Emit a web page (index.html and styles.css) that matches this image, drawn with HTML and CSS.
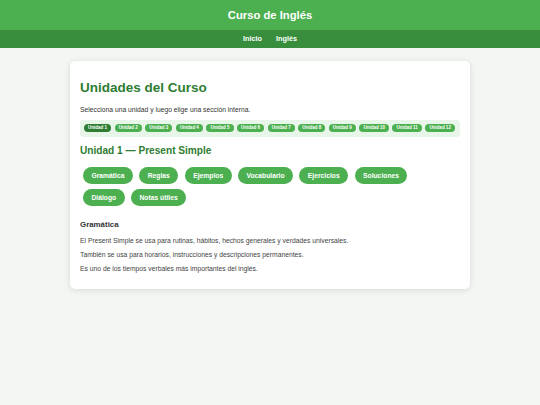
FILE: index.html
```html
<!DOCTYPE html>
<html lang="es">
<head>
<meta charset="utf-8">
<title>Curso de Inglés</title>
<link rel="stylesheet" href="styles.css">
</head>
<body>
<header class="site-header">
  <div class="site-title">Curso de Inglés</div>
</header>
<nav class="site-nav">
  <a href="#" class="nav-link">Inicio</a>
  <a href="#" class="nav-link">Inglés</a>
</nav>
<main class="page">
  <section class="card">
    <h1 class="card-title">Unidades del Curso</h1>
    <p class="intro">Selecciona una unidad y luego elige una sección interna.</p>
    <div class="units">
      <span class="unit active">Unidad 1</span>
      <span class="unit">Unidad 2</span>
      <span class="unit">Unidad 3</span>
      <span class="unit">Unidad 4</span>
      <span class="unit">Unidad 5</span>
      <span class="unit">Unidad 6</span>
      <span class="unit">Unidad 7</span>
      <span class="unit">Unidad 8</span>
      <span class="unit">Unidad 9</span>
      <span class="unit">Unidad 10</span>
      <span class="unit">Unidad 11</span>
      <span class="unit">Unidad 12</span>
    </div>
    <h2 class="unit-title">Unidad 1 — Present Simple</h2>
    <div class="sections">
      <span class="section-btn">Gramática</span>
      <span class="section-btn">Reglas</span>
      <span class="section-btn">Ejemplos</span>
      <span class="section-btn">Vocabulario</span>
      <span class="section-btn">Ejercicios</span>
      <span class="section-btn">Soluciones</span>
      <span class="section-btn">Diálogo</span>
      <span class="section-btn">Notas útiles</span>
    </div>
    <div class="content">
      <h3 class="content-title">Gramática</h3>
      <p class="content-text">El Present Simple se usa para rutinas, hábitos, hechos generales y verdades universales.</p>
      <p class="content-text">También se usa para horarios, instrucciones y descripciones permanentes.</p>
      <p class="content-text">Es uno de los tiempos verbales más importantes del inglés.</p>
    </div>
  </section>
</main>
</body>
</html>
```

FILE: styles.css
```css
* { box-sizing: border-box; }

html, body {
  margin: 0;
  padding: 0;
}

body {
  background: #f4f6f4;
  font-family: "Liberation Sans", Arial, sans-serif;
  color: #333;
}

.site-header {
  background: #4caf50;
  height: 30px;
  display: flex;
  align-items: center;
  justify-content: center;
}

.site-title {
  color: #fff;
  font-weight: bold;
  font-size: 11.25px;
}

.site-nav {
  background: #388e3c;
  height: 17.5px;
  display: flex;
  align-items: center;
  justify-content: center;
  gap: 14px;
}

.nav-link {
  color: #fff;
  font-weight: bold;
  font-size: 7.3px;
  text-decoration: none;
}

.page {
  padding: 13.5px 0;
  display: flex;
  justify-content: center;
}

.card {
  width: 400px;
  background: #fff;
  border-radius: 5px;
  box-shadow: 0 1px 6px rgba(0, 0, 0, 0.12);
  padding: 10px 10px 10px;
}

.card-title {
  margin: 9px 0 0;
  font-size: 13.5px;
  color: #2e7d32;
  font-weight: bold;
}

.intro {
  margin: 11.4px 0 0;
  font-size: 6.75px;
  color: #333;
}

.units {
  margin-top: 6.2px;
  background: #e8f5e9;
  border-radius: 4px;
  padding: 4.5px 4px;
  display: flex;
  flex-wrap: wrap;
  gap: 3.4px;
}

.unit {
  background: #4caf50;
  color: #fff;
  font-weight: bold;
  font-size: 4.5px;
  line-height: 5.2px;
  padding: 1.4px 4.1px;
  border-radius: 10px;
}

.unit.active {
  background: #2e7d32;
}

.unit-title {
  margin: 8px 0 0;
  font-size: 10.125px;
  color: #2e7d32;
  font-weight: bold;
}

.sections {
  margin: 8.7px 30px 0 0;
  display: flex;
  flex-wrap: wrap;
}

.section-btn {
  margin: 2.8px 3.4px 2.8px 3px;
  background: #4caf50;
  color: #fff;
  font-weight: bold;
  font-size: 6.75px;
  line-height: 7.8px;
  padding: 4.5px 8.44px;
  border-radius: 10px;
}

.content {
  margin-top: 10.7px;
}

.content-title {
  margin: 0;
  font-size: 7.9px;
  color: #333;
  font-weight: bold;
}

.content-text {
  margin: 7.2px 0 0;
  font-size: 6.75px;
  color: #444;
}

.content-title + .content-text {
  margin-top: 7.9px;
}

.content-text:last-child {
  margin-bottom: 7.4px;
}
```
